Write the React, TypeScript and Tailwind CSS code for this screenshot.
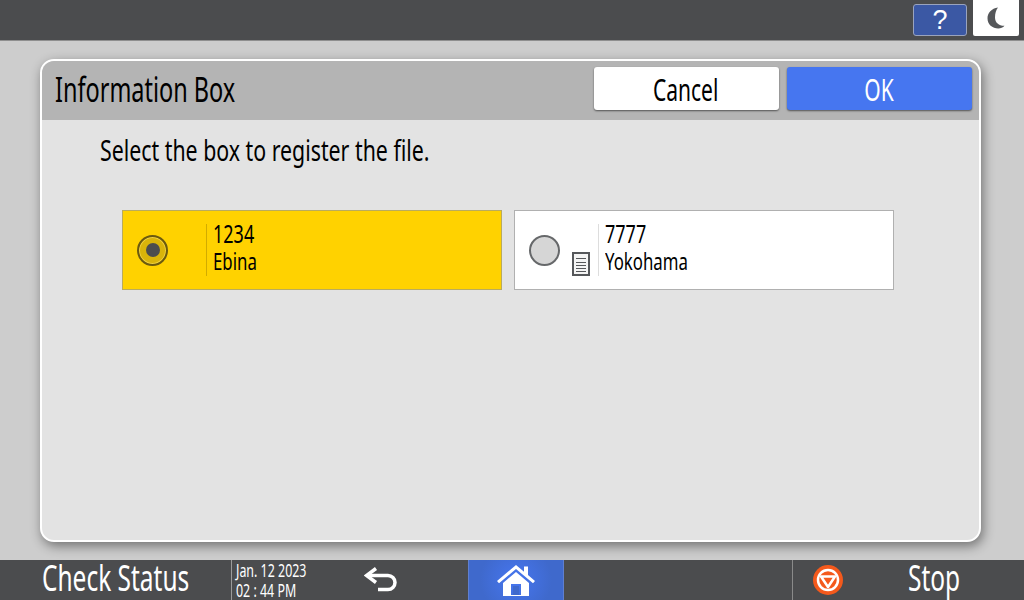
import type { ReactNode } from "react";

const FONT = "[font-family:'Noto_Sans','Liberation_Sans',sans-serif]";

// the panel's typeface is a narrow one, so squeeze the nearest installed font
function Narrow({ children, className = "" }: { children: ReactNode; className?: string }) {
  return <span className={`inline-block origin-left whitespace-nowrap ${className}`}>{children}</span>;
}

function Radio({ checked }: { checked: boolean }) {
  if (checked) {
    return (
      <span className="flex h-[31px] w-[31px] shrink-0 items-center justify-center rounded-full border-[2px] border-[#6b5a10] bg-[#d9b40a] shadow-[inset_0_0_0_1px_#f0d040]">
        <span className="h-[14px] w-[14px] rounded-full bg-[#4b4c4e]" />
      </span>
    );
  }
  return <span className="h-[31px] w-[31px] shrink-0 rounded-full border-[2px] border-[#66686a] bg-[#d6d6d6]" />;
}

function DocIcon() {
  return (
    <svg width="18" height="24" viewBox="0 0 18 24" fill="none" stroke="#55575a">
      <rect x="1" y="1" width="16" height="22" strokeWidth="2" fill="#f4f4f4" />
      <path d="M4 6.500h10M4 10.500h10M4 13.500h10M4 16.500h10M4 19.500h10" strokeWidth="1" />
    </svg>
  );
}

function BoxCard({
  selected,
  number,
  name,
  showDoc,
}: {
  selected: boolean;
  number: string;
  name: string;
  showDoc?: boolean;
}) {
  return (
    <button
      type="button"
      className={`flex h-[80px] w-[380px] items-center border pl-[14px] text-left text-black ${
        selected ? "border-[#b9ab5e] bg-[#ffd200]" : "border-[#b0b0b0] bg-white"
      }`}
    >
      <Radio checked={selected} />
      <span className="flex h-full w-[38px] shrink-0 items-end justify-end pb-[13px] pr-[8px]">
        {showDoc ? <DocIcon /> : null}
      </span>
      <span
        className={`flex h-[52px] flex-col gap-[2px] border-l pl-[6px] ${
          selected ? "border-[#d2ab00]" : "border-[#dddddd]"
        }`}
      >
        <Narrow className="-mt-[4px] scale-x-[0.72] text-[25px] leading-[26px]">{number}</Narrow>
        <Narrow className="scale-x-[0.7] text-[24px] leading-[26px]">{name}</Narrow>
      </span>
    </button>
  );
}

export default function App() {
  return (
    <div className={`flex h-[600px] w-[1024px] flex-col overflow-hidden bg-[#cdcdcd] ${FONT}`}>
      <header className="flex h-[41px] shrink-0 items-start justify-end gap-[6px] border-b border-[#8f8f8f] bg-[#4b4c4e] pr-[5px] pt-[4px]">
        <button
          type="button"
          className="flex h-[32px] w-[54px] items-center justify-center rounded-[3px] border border-[#9aa3bd] bg-[#3b58a4] font-['Liberation_Sans'] text-[27px] leading-none text-white"
        >
          ?
        </button>
        <button
          type="button"
          className="-mt-[4px] flex h-[36px] w-[46px] items-center justify-center rounded-b-[2px] bg-white"
        >
          <svg width="18" height="22" viewBox="0 0 18 22">
            <path d="M11 .5C4.500 1.500.5 5.800.5 11.200c0 6 4.800 10.300 10.800 10.300 2.400 0 4.700-1 6.200-2.700-5.300.2-9.500-3-9.500-8.300C8 6.500 9 3 11 .5z" fill="#55575a" />
          </svg>
        </button>
      </header>

      <main className="flex-1 px-[40px] pt-[18px]">
        <section className="flex h-[483px] w-[941px] flex-col overflow-hidden rounded-[14px] border-[2px] border-white bg-[#e3e3e3] shadow-[2px_4px_12px_rgba(0,0,0,0.45)]">
          <div className="flex h-[59px] shrink-0 items-start justify-between bg-[#b4b4b4] pl-[13px] pr-[7px] pt-[6px] text-black">
            <h1 className="pt-[3px] text-[34px] font-normal leading-[38px]">
              <Narrow className="scale-x-[0.69]">Information Box</Narrow>
            </h1>
            <div className="flex gap-[8px]">
              <button
                type="button"
                className="flex h-[43px] w-[185px] items-center justify-center rounded-[3px] bg-white pr-[2px] pt-[3px] text-[30px] leading-none shadow-[0_1px_2px_rgba(0,0,0,0.55)]"
              >
                <span className="scale-x-[0.7] whitespace-nowrap">Cancel</span>
              </button>
              <button
                type="button"
                className="flex h-[43px] w-[185px] items-center justify-center rounded-[3px] bg-[#4676f0] pt-[3px] text-[30px] leading-none text-white shadow-[0_1px_2px_rgba(0,0,0,0.55)]"
              >
                <span className="-ml-[2px] scale-x-[0.7] whitespace-nowrap">OK</span>
              </button>
            </div>
          </div>

          <div className="flex-1 pl-[80px] pt-[11px] text-black">
            <p className="-ml-[22px] text-[29px] leading-[38px]">
              <Narrow className="scale-x-[0.735]">Select the box to register the file.</Narrow>
            </p>
            <div className="mt-[41px] flex gap-[12px]">
              <BoxCard selected number="1234" name="Ebina" />
              <BoxCard selected={false} number="7777" name="Yokohama" showDoc />
            </div>
          </div>
        </section>
      </main>

      <footer className="flex h-[40px] shrink-0 items-stretch bg-[#4b4c4e] text-white">
        <div className="flex w-[231px] items-center pb-[5px] pl-[42px] text-[36px] leading-none">
          <Narrow className="scale-x-[0.68]">Check Status</Narrow>
        </div>
        <div className="flex w-[120px] flex-col justify-center border-l border-[#9a9a9a] pl-[4px] text-[18px] leading-[20px]">
          <Narrow className="scale-x-[0.69]">Jan. 12 2023</Narrow>
          <Narrow className="scale-x-[0.69]">02 : 44 PM</Narrow>
        </div>
        <div className="flex w-[117px] items-center pl-[13px]">
          <svg width="34" height="26" viewBox="0 0 34 26" fill="none">
            <path d="M3 8.500h21a7 7 0 0 1 0 14H14" stroke="#fff" strokeWidth="3.500" />
            <path d="M12 1.500 2.500 8.500l9.500 7" stroke="#fff" strokeWidth="3.500" strokeLinejoin="miter" />
          </svg>
        </div>
        <div className="flex w-[96px] items-center justify-center border-x border-[#5f7fd0] bg-[radial-gradient(circle,#4676f0_0%,#3f69cc_70%)]">
          <svg width="40" height="32" viewBox="0 0 40 32">
            <path d="M1 17 20 1l8 6.700V2.500h4v8.600L39 17l-2 2.300L20 5 3 19.300z" fill="#fff" />
            <path fillRule="evenodd" d="M7 19 20 8l13 11v13H7zM15 20v11h10V20z" fill="#fff" />
            <rect x="17" y="22" width="6" height="9" fill="#3f69cc" />
          </svg>
        </div>
        <div className="flex-1" />
        <div className="flex w-[232px] items-center border-l border-[#8a8a8a] pl-[20px]">
          <svg width="30" height="30" viewBox="0 0 30 30">
            <circle cx="15" cy="15" r="15" fill="#f4591c" />
            <circle cx="15" cy="15" r="10" fill="none" stroke="#fff" strokeWidth="2.500" />
            <path d="M8 11.500h14L15 22z" fill="none" stroke="#fff" strokeWidth="2.500" strokeLinejoin="round" />
          </svg>
          <span className="ml-[65px] pb-[5px] text-[36px] leading-none">
            <Narrow className="scale-x-[0.68]">Stop</Narrow>
          </span>
        </div>
      </footer>
    </div>
  );
}
